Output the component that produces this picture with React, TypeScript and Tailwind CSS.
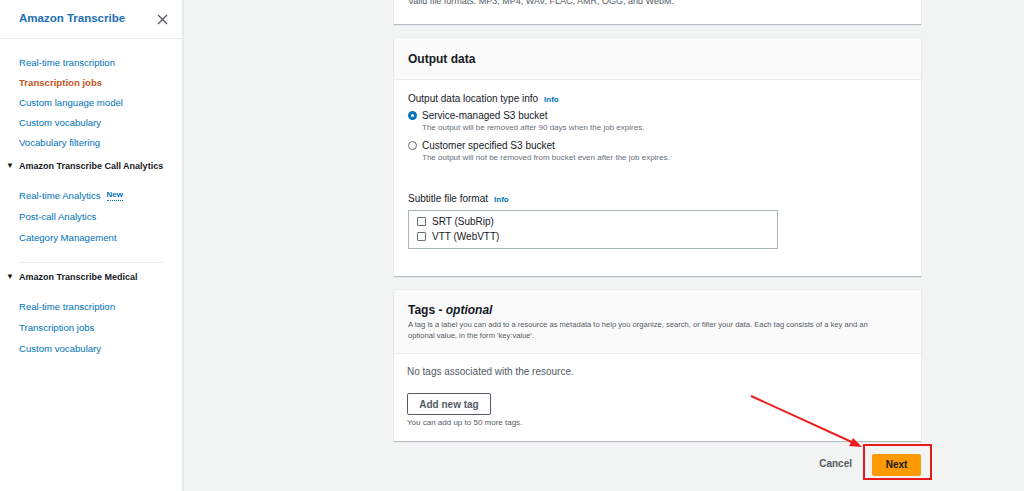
import React from "react";

const font = { fontFamily: '"Liberation Sans", Arial, sans-serif' };

const NavLink: React.FC<{ label: string; active?: boolean; badge?: string }> = ({
  label,
  active,
  badge,
}) => (
  <div className="h-[20px] flex items-center pl-[19px] text-[9.6px] leading-none">
    <span className={active ? "text-[#c4561b] font-bold" : "text-[#0073bb]"}>{label}</span>
    {badge && (
      <span className="ml-[6px] text-[8px] font-bold text-[#0073bb] border-b border-dotted border-[#0073bb] pb-[1px]">
        {badge}
      </span>
    )}
  </div>
);

const NavSection: React.FC<{ label: string }> = ({ label }) => (
  <div className="h-[20px] flex items-center pl-[6px] text-[9px] font-bold text-[#16191f] leading-none">
    <span className="text-[8px] mr-[5px]">▼</span>
    {label}
  </div>
);

const Radio: React.FC<{ checked?: boolean; label: string; desc: string }> = ({ checked, label, desc }) => (
  <div className="flex items-start gap-[5px]">
    <div
      className={
        checked
          ? "mt-[1px] w-[9px] h-[9px] rounded-full border-[3px] border-[#0073bb] bg-white shrink-0"
          : "mt-[1px] w-[9px] h-[9px] rounded-full border border-[#687078] bg-white shrink-0"
      }
    />
    <div>
      <div className="text-[10px] leading-[12px] text-[#16191f]">{label}</div>
      <div className="text-[8px] leading-[12px] text-[#687078]">{desc}</div>
    </div>
  </div>
);

const Check: React.FC<{ label: string }> = ({ label }) => (
  <div className="flex items-center gap-[6px] h-[15px]">
    <div className="w-[9px] h-[9px] border border-[#687078] rounded-[1px] bg-white" />
    <span className="text-[10px] text-[#16191f]">{label}</span>
  </div>
);

export default function App() {
  return (
    <div className="w-[1024px] h-[491px] flex overflow-hidden bg-[#f2f3f3] relative" style={font}>
      {/* Side navigation */}
      <aside className="w-[184px] h-full bg-white border-r-2 border-[#e6eaea] shrink-0">
        <div className="h-[39px] flex items-center justify-between pl-[19px] pr-[14px] border-b border-[#eaeded]">
          <span className="text-[11.5px] font-bold text-[#1b6fb5]">Amazon Transcribe</span>
          <svg width="11" height="11" viewBox="0 0 11 11" className="text-[#545b64]">
            <path d="M1 1 L10 10 M10 1 L1 10" stroke="currentColor" strokeWidth="1.4" />
          </svg>
        </div>
        <div className="pt-[14px]">
          <NavLink label="Real-time transcription" />
          <NavLink label="Transcription jobs" active />
          <NavLink label="Custom language model" />
          <NavLink label="Custom vocabulary" />
          <NavLink label="Vocabulary filtering" />
          <div className="mt-[3px]">
            <NavSection label="Amazon Transcribe Call Analytics" />
          </div>
          <div className="mt-[10px] flex flex-col gap-[1px]">
            <NavLink label="Real-time Analytics" badge="New" />
            <NavLink label="Post-call Analytics" />
            <NavLink label="Category Management" />
          </div>
          <div className="mx-[19px] mt-[14px] mb-[4px] border-t border-[#eaeded]" />
          <NavSection label="Amazon Transcribe Medical" />
          <div className="mt-[10px] flex flex-col gap-[1px]">
            <NavLink label="Real-time transcription" />
            <NavLink label="Transcription jobs" />
            <NavLink label="Custom vocabulary" />
          </div>
        </div>
      </aside>

      {/* Main content */}
      <main className="flex-1 pl-[210px]">
        <div className="w-[527px] flex flex-col gap-[13px] -mt-[16px]">
          <div className="bg-white shadow-[0_1px_1px_rgba(0,31,63,0.25)] px-[14px] pt-[11px] pb-[17px]">
            <div className="text-[9px] text-[#545b64] leading-[12px]">
              Valid file formats: MP3, MP4, WAV, FLAC, AMR, OGG, and WebM.
            </div>
          </div>

          <div className="bg-white shadow-[0_1px_1px_rgba(0,31,63,0.25)] border-t border-[#eaeded]">
            <div className="h-[42px] bg-[#fafafa] border-b border-[#eaeded] flex items-center px-[14px]">
              <span className="text-[12px] font-bold text-[#16191f]">Output data</span>
            </div>
            <div className="px-[14px] pt-[13px] pb-[27px]">
              <div className="text-[10px] text-[#16191f] leading-[12px]">
                Output data location type info
                <span className="ml-[6px] text-[8px] font-bold text-[#0073bb]">Info</span>
              </div>
              <div className="mt-[4px] flex flex-col gap-[6px]">
                <Radio checked label="Service-managed S3 bucket" desc="The output will be removed after 90 days when the job expires." />
                <Radio label="Customer specified S3 bucket" desc="The output will not be removed from bucket even after the job expires." />
              </div>
              <div className="mt-[29px] text-[10px] text-[#16191f] leading-[12px]">
                Subtitle file format
                <span className="ml-[6px] text-[8px] font-bold text-[#0073bb]">Info</span>
              </div>
              <div className="mt-[4px] w-[370px] h-[39px] border border-[#aab7b8] px-[8px] pt-[3px]">
                <Check label="SRT (SubRip)" />
                <Check label="VTT (WebVTT)" />
              </div>
            </div>
          </div>

          <div className="bg-white shadow-[0_1px_1px_rgba(0,31,63,0.25)] border-t border-[#eaeded]">
            <div className="h-[64px] bg-[#fafafa] border-b border-[#eaeded] px-[14px] pt-[12px]">
              <div className="text-[12px] font-bold text-[#16191f] leading-[16px]">
                Tags - <i>optional</i>
              </div>
              <div className="mt-[1px] text-[7.6px] text-[#545b64] leading-[11px] w-[480px]">
                A tag is a label you can add to a resource as metadata to help you organize, search, or filter your data. Each tag consists of a key and an optional value, in the form 'key:value'.
              </div>
            </div>
            <div className="px-[13px] pt-[12px] pb-[13px]">
              <div className="text-[10px] text-[#545b64] leading-[12px]">No tags associated with the resource.</div>
              <button className="mt-[15px] w-[84px] h-[22px] border border-[#545b64] rounded-[2px] bg-white text-[10px] font-bold text-[#545b64]">
                Add new tag
              </button>
              <div className="mt-[2px] text-[8px] text-[#545b64] leading-[11px]">You can add up to 50 more tags.</div>
            </div>
          </div>

          <div className="flex items-center justify-end gap-[20px] -mt-[3px]">
            <span className="text-[10px] font-bold text-[#545b64]">Cancel</span>
            <div className="relative">
              <button className="w-[49px] h-[22px] bg-[#ff9900] rounded-[2px] text-[10px] font-bold text-[#16191f]">
                Next
              </button>
              <div className="absolute -left-[9px] -top-[7px] w-[69px] h-[36px] border-2 border-[#e8191b]" />
            </div>
          </div>
        </div>
      </main>

      {/* Annotation arrow */}
      <svg className="absolute left-0 top-0 pointer-events-none" width="1024" height="491">
        <line x1="751" y1="396" x2="854" y2="443" stroke="#ee1c1c" strokeWidth="2" />
        <polygon points="862,447 849,446 853,438" fill="#ee1c1c" />
      </svg>
    </div>
  );
}
